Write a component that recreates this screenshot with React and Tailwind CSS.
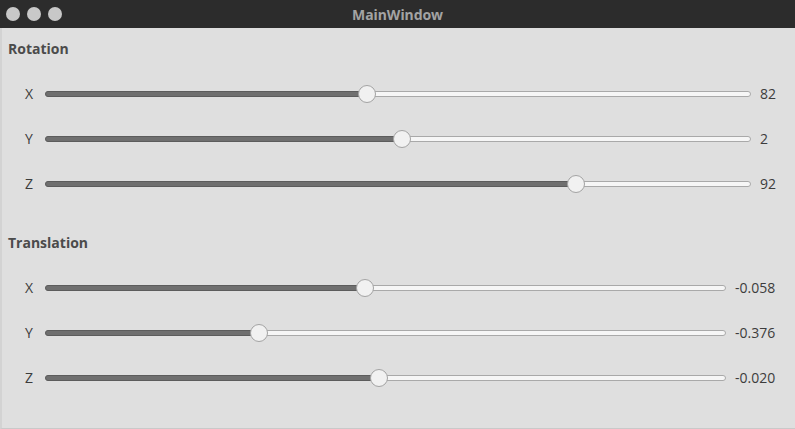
const rotation = [
  { axis: "X", value: "82", pos: 0.456 },
  { axis: "Y", value: "2", pos: 0.506 },
  { axis: "Z", value: "92", pos: 0.752 },
];

const translation = [
  { axis: "X", value: "-0.058", pos: 0.47 },
  { axis: "Y", value: "-0.376", pos: 0.314 },
  { axis: "Z", value: "-0.020", pos: 0.49 },
];

const Slider = ({ pos }) => (
  <div className="relative flex-1 h-[18px] flex items-center">
    <div className="relative w-full h-[6px] rounded-full bg-[#f6f6f6] border border-[#a9a9a9]">
      <div
        className="absolute left-[-1px] top-[-1px] h-[6px] rounded-full bg-[#6f6f6f] border border-[#5c5c5c]"
        style={{ width: `${pos * 100}%` }}
      />
    </div>
    <div
      className="absolute top-0 w-[18px] h-[18px] -ml-[9px] rounded-full bg-[#f1f1f1] border border-[#a3a3a3]"
      style={{ left: `${pos * 100}%` }}
    />
  </div>
);

const Group = ({ title, rows, valueWidth, className }) => (
  <div className={className}>
    <div className="h-5 leading-5 pl-[6px] text-[14px] font-bold text-[#4b4b4b]">{title}</div>
    <div className="mt-[12px]">
      {rows.map((r) => (
        <div key={r.axis} className="h-[45px] flex items-center">
          <div className="w-[43px] pl-[23px] text-[14px] text-[#3c3c3c]">{r.axis}</div>
          <Slider pos={r.pos} />
          <div className={`${valueWidth} pl-[9px] text-[14px] text-[#3c3c3c]`}>{r.value}</div>
        </div>
      ))}
    </div>
  </div>
);

export default function App() {
  return (
    <div
      className="w-[795px] h-[429px] flex flex-col bg-[#dfdfdf] overflow-hidden"
      style={{ fontFamily: '"Open Sans", "Noto Sans", sans-serif' }}
    >
      {/* title bar */}
      <div className="relative h-[28px] shrink-0 bg-[#2c2c2c] flex items-center justify-center">
        <div className="absolute left-[6px] top-[7px] flex gap-[7px]">
          <span className="w-[14px] h-[14px] rounded-full bg-[#c8c8c8]" />
          <span className="w-[14px] h-[14px] rounded-full bg-[#c8c8c8]" />
          <span className="w-[14px] h-[14px] rounded-full bg-[#c8c8c8]" />
        </div>
        <span className="text-[14px] font-bold text-[#a3a3a3]" style={{ fontFamily: '"Noto Sans", sans-serif' }}>
          MainWindow
        </span>
      </div>

      {/* body */}
      <div className="flex-1 border-l-2 border-[#d3d3d3] border-b border-b-[#c9c9c9] pt-[11px]">
        <Group title="Rotation" rows={rotation} valueWidth="w-[44px]" />
        <Group title="Translation" rows={translation} valueWidth="w-[69px]" className="mt-[27px]" />
      </div>
    </div>
  );
}
